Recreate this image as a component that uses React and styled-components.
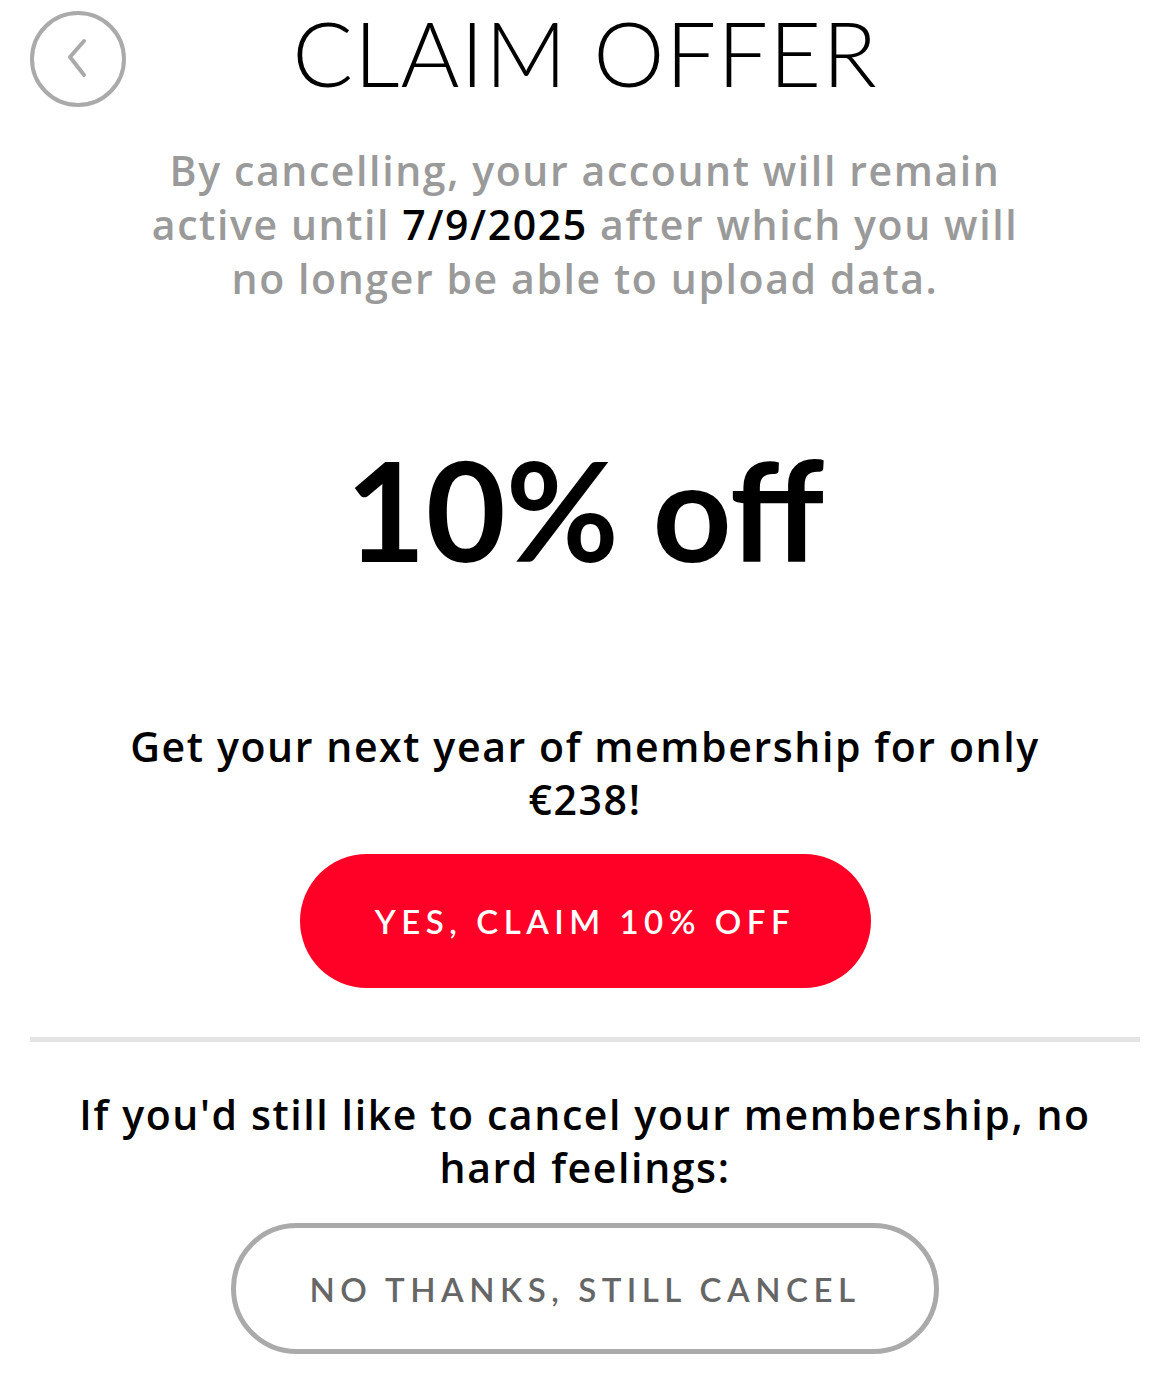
import styled, { createGlobalStyle } from "styled-components";

const GlobalStyle = createGlobalStyle`
  body {
    margin: 0;
    background: #ffffff;
    font-family: "Open Sans", "Liberation Sans", sans-serif;
  }
`;

const Page = styled.div`
  width: 1169px;
  box-sizing: border-box;
  padding: 0 29px 0 30px;
  display: flex;
  flex-direction: column;
  align-items: center;
`;

const Header = styled.div`
  width: 100%;
  height: 116px;
  display: grid;
  grid-template-columns: 1fr auto 1fr;
  align-items: center;
`;

const BackButton = styled.button`
  width: 96px;
  height: 96px;
  padding: 0;
  border: 4px solid #aaaaaa;
  border-radius: 50%;
  background: transparent;
  box-sizing: border-box;
  display: flex;
  align-items: center;
  justify-content: center;
  justify-self: start;
  margin-top: 2px;
`;

const Title = styled.h1`
  margin: 0;
  font-family: "Lato", sans-serif;
  font-weight: 300;
  font-size: 90px;
  line-height: 116px;
  color: #000;
  letter-spacing: 1px;
  margin-top: -12px;
`;

const Subtitle = styled.p`
  margin: 27px 0 0;
  font-size: 41px;
  line-height: 54px;
  letter-spacing: 1.6px;
  font-weight: 600;
  color: #9a9a9a;
  text-align: center;
  max-width: 890px;
`;

const Strong = styled.span`
  color: #000;
`;

const Hero = styled.div`
  margin-top: 134px;
  font-family: "Lato", sans-serif;
  font-size: 138px;
  line-height: 140px;
  font-weight: 700;
  color: #000;
`;

const Text = styled.p`
  margin: ${(p) => p.$top}px 0 0;
  font-size: 41px;
  line-height: 53px;
  letter-spacing: 1.6px;
  font-weight: 600;
  color: #000;
  text-align: center;
  max-width: ${(p) => p.$width}px;
`;

const Pill = styled.button`
  margin-top: ${(p) => p.$top}px;
  width: ${(p) => p.$width}px;
  height: ${(p) => p.$height}px;
  border-radius: 999px;
  box-sizing: border-box;
  font-family: "Lato", sans-serif;
  font-size: 33px;
  font-weight: 600;
  letter-spacing: 5.5px;
  background: ${(p) => (p.$outline ? "#fff" : "#ff0026")};
  color: ${(p) => (p.$outline ? "#666666" : "#ffffff")};
  border: ${(p) => (p.$outline ? "5px solid #aaaaaa" : "none")};
`;

const Divider = styled.hr`
  width: 100%;
  height: 5px;
  margin: 49px 0 0;
  border: none;
  background: #e4e4e4;
`;

export default function App() {
  return (
    <>
      <GlobalStyle />
      <Page>
        <Header>
          <BackButton aria-label="Back">
            <svg width="28" height="44" viewBox="0 0 28 44">
              <path
                d="M20 4 L6 20 L20 38"
                fill="none"
                stroke="#aaaaaa"
                strokeWidth="4"
                strokeLinecap="round"
                strokeLinejoin="round"
              />
            </svg>
          </BackButton>
          <Title>CLAIM OFFER</Title>
          <div />
        </Header>
        <Subtitle>
          By cancelling, your account will remain active until{" "}
          <Strong>7/9/2025</Strong> after which you will no longer be able to
          upload data.
        </Subtitle>
        <Hero>10% off</Hero>
        <Text $top={141} $width={930}>
          Get your next year of membership for only €238!
        </Text>
        <Pill $top={28} $width={571} $height={134}>
          YES, CLAIM 10% OFF
        </Pill>
        <Divider />
        <Text $top={46} $width={1060}>
          If you'd still like to cancel your membership, no hard feelings:
        </Text>
        <Pill $outline $top={29} $width={708} $height={131}>
          NO THANKS, STILL CANCEL
        </Pill>
      </Page>
    </>
  );
}
